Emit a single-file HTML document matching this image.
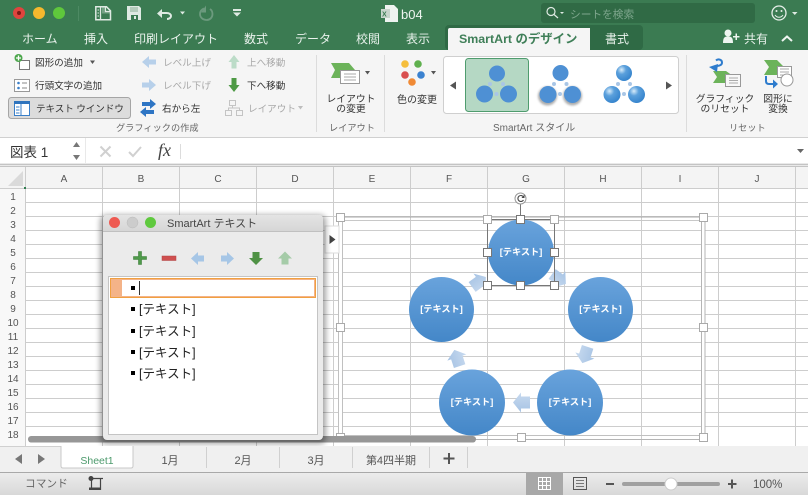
<!DOCTYPE html>
<html><head><meta charset="utf-8">
<style>
html,body{margin:0;padding:0;background:#fff}
svg{display:block}
text{font-family:"Liberation Sans","Noto Sans CJK JP",sans-serif}
.t{font-size:12px;fill:#e9f2ec}
.r{font-size:9.6px;fill:#333}
.d{font-size:9.6px;fill:#a9a9a9}
.g{font-size:9.2px;fill:#666}
.h{font-size:10px;fill:#555;text-anchor:middle}
.s{font-size:11px;fill:#555;text-anchor:middle}
.c{font-size:9.2px;fill:#fff;text-anchor:middle;font-weight:bold}
.l{font-size:12.5px;fill:#222}
.m{font-size:9.8px;fill:#333;text-anchor:middle}
</style></head><body>
<svg width="808" height="495" viewBox="0 0 808 495" xmlns="http://www.w3.org/2000/svg">
<defs>
<linearGradient id="cb" x1="0" y1="0" x2="0" y2="1"><stop offset="0" stop-color="#69a3dc"/><stop offset="1" stop-color="#4487c8"/></linearGradient>
<linearGradient id="ar" x1="0" y1="0" x2="0" y2="1"><stop offset="0" stop-color="#a6c3e4"/><stop offset="1" stop-color="#c8daef"/></linearGradient>
<linearGradient id="st" x1="0" y1="0" x2="0" y2="1"><stop offset="0" stop-color="#ececec"/><stop offset="1" stop-color="#d8d8d8"/></linearGradient>
<linearGradient id="tb" x1="0" y1="0" x2="0" y2="1"><stop offset="0" stop-color="#e4e4e4"/><stop offset="1" stop-color="#d6d6d6"/></linearGradient>
<radialGradient id="sh" cx=".35" cy=".3" r=".8"><stop offset="0" stop-color="#d8ecfa"/><stop offset=".35" stop-color="#5ba0dc"/><stop offset="1" stop-color="#2f7fca"/></radialGradient>
<filter id="bl" x="-10%" y="-10%" width="120%" height="120%"><feGaussianBlur stdDeviation="3"/></filter>
<filter id="bs" x="-30%" y="-30%" width="160%" height="160%"><feGaussianBlur stdDeviation="1"/></filter>
<g id="arr"><path d="M-8.5,-6H0.5V-10L8.5,0L0.5,10V6H-8.5Z" fill="url(#ar)"/></g>
</defs>

<!-- title bar -->
<rect width="808" height="50" fill="#3b7b52"/>
<circle cx="19" cy="13" r="6" fill="#e0443e"/><circle cx="19" cy="13" r="2" fill="#7c1a16"/>
<circle cx="39" cy="13" r="6" fill="#f5b82e"/>
<circle cx="59" cy="13" r="6" fill="#5fc73c"/>
<line x1="78.5" y1="6" x2="78.5" y2="21" stroke="#4d8a63"/>
<path d="M95.800,6.800h10.700l4,4v8.900h-14.700z" fill="none" stroke="#dfeae3" stroke-width="1.500"/>
<path d="M100.500,6.500v13" stroke="#dfeae3" stroke-width="1.300"/><path d="M102,7h3.500v4.500h4.500v2h-8z" fill="#dfeae3" opacity=".35"/>
<path d="M105.500,7v4.500h4.500" fill="none" stroke="#dfeae3" stroke-width="1.200"/>
<path d="M97.500,10h1.500M97.500,13h1.500M97.500,16h1.500" stroke="#dfeae3"/>
<path d="M127,6h12l2,2v12h-14z" fill="#dfeae3"/>
<rect x="130" y="7" width="8" height="5" fill="#b4ccbc"/><rect x="131" y="15" width="7" height="5" fill="#3b7b52"/><rect x="134" y="16" width="2" height="3" fill="#dfeae3"/>
<path d="M157,13.500l5-4.500v9z" fill="#dfeae3"/>
<path d="M160,13h6.500c3,0 4.500,1.500 4.500,3s-1.500,3-4,3" fill="none" stroke="#dfeae3" stroke-width="2"/>
<path d="M180,11.500h5l-2.500,3z" fill="#dfeae3"/>
<path d="M204,8.500c-2.500,1-4,3-4,5.500 0,3.500 3,6 6.500,6s6-2.500 6-6c0-2-1-4-2.500-5" fill="none" stroke="#6c9a7e" stroke-width="1.800"/><path d="M206,5.500v7h-5z" fill="#6c9a7e"/>
<path d="M233,9h8v2h-8zM233,12.500h8l-4,4z" fill="#dfeae3"/>
<path d="M385,5h9l4,4v13h-13z" fill="#eef3f0"/><rect x="381" y="9" width="9" height="9" fill="#c8d5cc"/><text x="382" y="16.500" font-size="7" fill="#3b7b52" font-weight="bold">X</text>
<text x="401" y="19" font-size="13" fill="#eef5f0">b04</text>
<rect x="541" y="3" width="214" height="20" rx="3" fill="#306a45"/>
<circle cx="551" cy="11.500" r="4" fill="none" stroke="#dfeae3" stroke-width="1.200"/><line x1="554" y1="14.500" x2="558" y2="18" stroke="#dfeae3" stroke-width="1.200"/>
<path d="M560,12h4l-2,2z" fill="#dfeae3"/>
<text x="570" y="18" font-size="10.700" fill="#7ea68d">シートを検索</text>
<circle cx="779" cy="13" r="7" fill="none" stroke="#e6efe9" stroke-width="1.300"/><circle cx="776.500" cy="11" r="1" fill="#e6efe9"/><circle cx="781.500" cy="11" r="1" fill="#e6efe9"/><path d="M775,15c2,3 6,3 8,0" fill="none" stroke="#e6efe9"/>
<path d="M792,12h5.500l-2.750,3z" fill="#dfeae3"/>

<rect x="445" y="25" width="198" height="25" rx="4" fill="#2f6a45"/>
<path d="M448,50V30q0-2 2-2H590V50z" fill="#f5f5f5"/>
<text class="t" x="22" y="43">ホーム</text>
<text class="t" x="84" y="43">挿入</text>
<text class="t" x="134" y="43">印刷レイアウト</text>
<text class="t" x="244" y="43">数式</text>
<text class="t" x="295" y="43">データ</text>
<text class="t" x="356" y="43">校閲</text>
<text class="t" x="406" y="43">表示</text>
<text x="459" y="43" font-size="12.400" font-weight="bold" fill="#3f7f58">SmartArt のデザイン</text>
<text class="t" x="605" y="43">書式</text>
<circle cx="728" cy="33" r="3.500" fill="#eef5f0"/><path d="M723,43c0-6 2-6.500 5-6.500s5,.5 5,6.500z" fill="#eef5f0"/><path d="M733,36h2.500v-2.500h1.500v2.500h2.500v1.500h-2.500v2.500h-1.500v-2.500h-2.500z" fill="#eef5f0"/>
<text class="t" x="744" y="43">共有</text>
<path d="M782,41l5-4.500 5,4.500" fill="none" stroke="#eef5f0" stroke-width="2"/>

<!-- ribbon -->
<rect y="50" width="808" height="87" fill="#f5f5f5"/>
<line x1="316.500" y1="55" x2="316.500" y2="132" stroke="#dcdcdc"/>
<line x1="384.500" y1="55" x2="384.500" y2="132" stroke="#dcdcdc"/>
<line x1="686.500" y1="55" x2="686.500" y2="132" stroke="#dcdcdc"/>

<rect x="19.500" y="60.500" width="10" height="9" fill="#fff" stroke="#777"/>
<circle cx="18.500" cy="58" r="4" fill="#4ca64c"/><path d="M16,58h5M18.500,55.500v5" stroke="#fff" stroke-width="1.300"/>
<text class="r" x="35" y="66">図形の追加</text><path d="M90,60.500h5l-2.500,3.500z" fill="#555"/>
<rect x="14.500" y="79.500" width="15" height="12" fill="#fff" stroke="#999"/><circle cx="18.500" cy="83" r="1.300" fill="#3a7fc8"/><circle cx="18.500" cy="88" r="1.300" fill="#3a7fc8"/><path d="M22,83h5M22,88h5" stroke="#888"/>
<text class="r" x="35" y="89">行頭文字の追加</text>
<rect x="8.500" y="97.500" width="122" height="21" rx="3" fill="#dcdcdc" stroke="#a5a5a5"/>
<rect x="14.500" y="101.500" width="15" height="14" fill="#fff" stroke="#3a7fc8"/><rect x="14" y="101" width="16" height="3" fill="#2f74bd"/><path d="M21,104v11" stroke="#3a7fc8"/><path d="M16,107h3.500M16,110h3.500M16,113h3.500" stroke="#3a7fc8"/>
<text class="r" x="36" y="112" letter-spacing="-.1">テキスト ウインドウ</text>
<path d="M142,62l7-6v3.500h7v5h-7v3.500z" fill="#b7d0ea"/>
<text class="d" x="163" y="66">レベル上げ</text>
<path d="M156,85l-7,6v-3.500h-7v-5h7v-3.500z" fill="#b7d0ea"/>
<text class="d" x="163" y="89">レベル下げ</text>
<path d="M156,104l-6-5v3h-8v4h8v3zM140,112l6,-5v3h8v4h-8v3z" fill="#2e75c4"/>
<text class="r" x="162" y="112">右から左</text>
<path d="M234,55l5.500,7h-3v6.500h-5v-6.500h-3z" fill="#bcdcc8"/>
<text class="d" x="247" y="66">上へ移動</text>
<path d="M234,92l5.500-7h-3v-7h-5v7h-3z" fill="#4e9a45"/>
<text class="r" x="247" y="89">下へ移動</text>
<path d="M229.500,100.500h6v5h-6zM225.500,110.500h6v5h-6zM236.500,110.500h6v5h-6zM232.500,105.500v2.500M228.500,110.500v-2.500h11v2.500" fill="none" stroke="#c4c4c4"/>
<text class="d" x="248" y="112">レイアウト</text><path d="M298,106h5l-2.500,3.500z" fill="#bdbdbd"/>
<text class="g" x="116" y="131">グラフィックの作成</text>

<path d="M331,63h18l6,7-5,8H331l4-8z" fill="#6cb35a"/>
<rect x="340.500" y="70.500" width="19" height="13" fill="#fff" stroke="#999"/><path d="M344,74h12M344,77h12M344,80h12" stroke="#aaa"/>
<path d="M365,71h5l-2.500,3.500z" fill="#555"/>
<text class="m" x="351" y="102">レイアウト</text>
<text class="m" x="351" y="112">の変更</text>
<text class="g" x="329" y="131">レイアウト</text>

<circle cx="405" cy="64" r="3.800" fill="#f5be3c"/><circle cx="418" cy="64" r="3.800" fill="#5fb04e"/><circle cx="405" cy="75" r="3.800" fill="#d94f4f"/><circle cx="421" cy="75" r="3.800" fill="#3b82d0"/><circle cx="412" cy="82" r="3.800" fill="#f08a35"/>
<path d="M431,71h5l-2.500,3.500z" fill="#555"/>
<text x="397" y="103" font-size="10" fill="#333">色の変更</text>

<rect x="443.500" y="56.500" width="235" height="57" rx="3" fill="#fff" stroke="#cfcfcf"/>
<path d="M456,81.500l-6,4 6,4z" fill="#555"/><path d="M666,81.500l6,4-6,4z" fill="#555"/>
<rect x="465.500" y="58.500" width="63" height="53" rx="3" fill="#b5d8c4" stroke="#4f9c6e"/>
<g fill="#4e90d4"><circle cx="497" cy="73.500" r="8"/><circle cx="484.500" cy="94" r="8.500"/><circle cx="508.500" cy="94" r="8.500"/></g>
<g fill="#a9c6e6"><circle cx="490" cy="84" r="2"/><circle cx="503" cy="84" r="2"/><circle cx="496.500" cy="94" r="2"/></g>
<g fill="#777" opacity=".6" filter="url(#bs)"><circle cx="547.500" cy="96" r="9.500"/><circle cx="572.500" cy="96" r="9.500"/></g>
<g fill="#4e90d4"><circle cx="560.500" cy="73" r="8"/><circle cx="548" cy="94.500" r="8.500"/><circle cx="572.500" cy="94.500" r="8.500"/></g>
<g fill="#a9c6e6"><circle cx="554" cy="84" r="2"/><circle cx="566.500" cy="84" r="2"/><circle cx="560" cy="94" r="2"/></g>
<g fill="url(#sh)"><circle cx="624" cy="73" r="8"/><circle cx="612" cy="94.500" r="8.500"/><circle cx="636.500" cy="94.500" r="8.500"/></g>
<g fill="#a9c6e6"><circle cx="618" cy="84" r="2"/><circle cx="630" cy="84" r="2"/><circle cx="624" cy="94" r="2"/></g>
<text class="g" x="493" y="131" style="font-size:10px">SmartArt スタイル</text>

<path d="M713,71h13l7,5-4,7H713l4-6z" fill="#6cb35a"/>
<rect x="725.500" y="74.500" width="15" height="12" fill="#f8f8f8" stroke="#999"/><path d="M729,78h9M729,80.500h9M729,83h9" stroke="#aaa"/>
<path d="M709,67l9-3-1,8z" fill="#2e7ccd"/>
<path d="M715,66.500c4-1 7-1 7-4s-4-4-6-2" fill="none" stroke="#2e7ccd" stroke-width="2"/>
<path d="M764,60h13l7,7-4,8H764l5-8z" fill="#6cb35a"/>
<rect x="777.500" y="66.500" width="14" height="11" fill="#fff" stroke="#999"/><path d="M780,69h9M780,72h9M780,75h9" stroke="#aaa"/>
<circle cx="787" cy="80" r="6" fill="#fff" stroke="#999"/>
<path d="M766,76v5q0,3 3,3h4" fill="none" stroke="#2e7ccd" stroke-width="2"/><path d="M773,79.500l5,4.500-5,4.500z" fill="#2e7ccd"/>
<text class="m" x="725" y="102">グラフィック</text>
<text class="m" x="725" y="112">のリセット</text>
<text class="m" x="778" y="102">図形に</text>
<text class="m" x="778" y="112">変換</text>
<text class="g" x="729" y="131">リセット</text>

<!-- formula bar -->
<rect y="137" width="808" height="30" fill="#e9e9e9"/>
<rect y="138" width="85" height="25" fill="#fff"/>
<rect x="86" y="138" width="722" height="25" fill="#fff"/>
<line x1="0" y1="137.500" x2="808" y2="137.500" stroke="#d0d0d0"/>
<line x1="0" y1="164.500" x2="808" y2="164.500" stroke="#c4c4c4"/>
<line x1="0" y1="166.500" x2="808" y2="166.500" stroke="#c4c4c4"/>
<text x="10" y="157" font-size="13.500" fill="#333">図表 1</text>
<path d="M76.500,142l3.500,5h-7zM76.500,160l3.500-5h-7z" fill="#777"/>
<path d="M100.500,146.500l10,10M110.500,146.500l-10,10" stroke="#d0d0d0" stroke-width="2"/>
<path d="M129,152l4,4 8-9" fill="none" stroke="#d0d0d0" stroke-width="2"/>
<text x="158" y="156" font-size="18" font-style="italic" style="font-family:'Liberation Serif',serif" fill="#444">fx</text>
<line x1="180.500" y1="144" x2="180.500" y2="159" stroke="#dcdcdc"/>
<path d="M797,149h7l-3.500,4z" fill="#666"/>

<!-- sheet -->
<rect y="167" width="808" height="279" fill="#fff"/>
<rect y="167" width="808" height="21" fill="#f4f4f4"/>
<rect y="188" width="25" height="258" fill="#f8f8f8"/>
<path d="M23,171v15H8z" fill="#dadada"/>
<g stroke="#cdcdcd" fill="none">
<path d="M0,188.500H808M25,202.500H808M25,216.500H808M25,230.500H808M25,244.500H808M25,258.500H808M25,272.500H808M25,286.500H808M25,300.500H808M25,314.500H808M25,328.500H808M25,342.500H808M25,356.500H808M25,370.500H808M25,384.500H808M25,398.500H808M25,412.500H808M25,426.500H808"/>
<path d="M25.500,167V446M102.500,167V446M179.500,167V446M256.500,167V446M333.500,167V446M410.500,167V446M487.500,167V446M564.500,167V446M641.500,167V446M718.500,167V446M795.500,167V446"/>
</g>
<rect x="24" y="187" width="2" height="2" fill="#2e7d4f"/>
<g>
<text class="h" x="64" y="182">A</text><text class="h" x="141" y="182">B</text><text class="h" x="218" y="182">C</text><text class="h" x="295" y="182">D</text><text class="h" x="372" y="182">E</text><text class="h" x="449" y="182">F</text><text class="h" x="526" y="182">G</text><text class="h" x="603" y="182">H</text><text class="h" x="680" y="182">I</text><text class="h" x="757" y="182">J</text>
</g>
<g>
<text class="h" x="13" y="200">1</text><text class="h" x="13" y="214">2</text><text class="h" x="13" y="228">3</text><text class="h" x="13" y="242">4</text><text class="h" x="13" y="256">5</text><text class="h" x="13" y="270">6</text><text class="h" x="13" y="284">7</text><text class="h" x="13" y="298">8</text><text class="h" x="13" y="312">9</text><text class="h" x="13" y="326">10</text><text class="h" x="13" y="340">11</text><text class="h" x="13" y="354">12</text><text class="h" x="13" y="368">13</text><text class="h" x="13" y="382">14</text><text class="h" x="13" y="396">15</text><text class="h" x="13" y="410">16</text><text class="h" x="13" y="424">17</text><text class="h" x="13" y="438">18</text>
</g>

<!-- smartart frame -->
<line x1="340" y1="217" x2="703" y2="217" stroke="#a8a8a8"/>
<line x1="340" y1="220.500" x2="703" y2="220.500" stroke="#c8c8c8"/>
<line x1="340" y1="435.500" x2="703" y2="435.500" stroke="#c0c0c0"/>
<line x1="340" y1="439.500" x2="703" y2="439.500" stroke="#b5b5b5"/>
<rect x="338.500" y="217" width="4" height="222" fill="#fff" stroke="#c0c0c0"/>
<rect x="701.500" y="217" width="3.500" height="222" fill="#fff" stroke="#b5b5b5"/>
<use href="#arr" transform="translate(559,279) rotate(36)"/>
<use href="#arr" transform="translate(585,355) rotate(108)"/>
<use href="#arr" transform="translate(521.500,402.500) rotate(180)"/>
<use href="#arr" transform="translate(457,358) rotate(-108)"/>
<use href="#arr" transform="translate(479,282) rotate(-36)"/>
<g fill="url(#cb)">
<circle cx="521" cy="252.500" r="33"/><circle cx="600.500" cy="309.500" r="32.500"/><circle cx="570" cy="402.500" r="33"/><circle cx="472" cy="402.500" r="33"/><circle cx="441.500" cy="309.500" r="32.500"/>
</g>
<text class="c" x="521" y="255">[テキスト]</text>
<text class="c" x="600.500" y="312">[テキスト]</text>
<text class="c" x="570" y="405">[テキスト]</text>
<text class="c" x="472" y="405">[テキスト]</text>
<text class="c" x="441.500" y="312">[テキスト]</text>
<rect x="487.500" y="219.500" width="67" height="66" fill="none" stroke="#777"/>
<line x1="520.500" y1="204" x2="520.500" y2="219" stroke="#777"/>
<circle cx="520.500" cy="198.500" r="5.500" fill="#fff" stroke="#999"/>
<path d="M523.500,197a3,3 0 1 0 0,3" fill="none" stroke="#444" stroke-width="1.100"/><path d="M524.500,194.500v3.500h-3z" fill="#444"/>
<g fill="#fff" stroke="#777">
<rect x="483.500" y="215.500" width="8" height="8" stroke="#aaa"/><rect x="516.500" y="215.500" width="8" height="8"/><rect x="550.500" y="215.500" width="8" height="8" stroke="#aaa"/>
<rect x="483.500" y="248.500" width="8" height="8"/><rect x="550.500" y="248.500" width="8" height="8"/>
<rect x="483.500" y="281.500" width="8" height="8"/><rect x="516.500" y="281.500" width="8" height="8"/><rect x="550.500" y="281.500" width="8" height="8"/>
</g>
<g fill="#fff" stroke="#aaa">
<rect x="699.500" y="213.500" width="8" height="8"/><rect x="699.500" y="323.500" width="8" height="8"/><rect x="699.500" y="433.500" width="8" height="8"/>
<rect x="517.500" y="433.500" width="8" height="8"/><rect x="336.500" y="213.500" width="8" height="8"/><rect x="336.500" y="323.500" width="8" height="8"/><rect x="336.500" y="433.500" width="8" height="8"/>
</g>
<!-- scrollbar -->
<rect x="28" y="436" width="448" height="6.500" rx="3.200" fill="#979797"/>

<!-- flyout -->
<path d="M325,226h14v27h-14z" fill="#fff" stroke="#ddd"/>
<path d="M329.500,235l6,4.500-6,4.500z" fill="#444"/>

<!-- dialog -->
<rect x="100" y="215" width="226" height="229" rx="6" fill="#000" opacity=".35" filter="url(#bl)"/>
<rect x="103" y="215" width="220" height="225" rx="4" fill="#ebebeb"/>
<path d="M103,231v-12q0-4 4-4H319q4,0 4,4v12z" fill="url(#tb)"/>
<line x1="103" y1="231.500" x2="323" y2="231.500" stroke="#c0c0c0"/>
<circle cx="114.500" cy="222.500" r="5.500" fill="#ee5a52"/>
<circle cx="132.500" cy="222.500" r="5.500" fill="#cccccc" stroke="#bbb" stroke-width=".5"/>
<circle cx="150.500" cy="222.500" r="5.500" fill="#5fc93e"/>
<text x="167" y="227" font-size="11" fill="#444">SmartArt テキスト</text>

<path d="M138.500,251.500h3v5h5v3h-5v5h-3v-5h-5v-3h5z" fill="#4f9a4a" stroke="#3f7f3c" stroke-width=".6"/>
<rect x="162" y="256" width="14" height="4.500" fill="#cf4f4f" stroke="#b04545" stroke-width=".5"/>
<path d="M191,258.500l7-6.500v3.500h6v6h-6v3.500z" fill="#a6c6e6"/>
<path d="M234,258.500l-7-6.500v3.500h-6v6h6v3.500z" fill="#a6c6e6"/>
<path d="M256,265l7-7h-3.500v-6h-7v6h-3.500z" fill="#4f9245"/>
<path d="M285,251.500l7,7h-3.500v6h-7v-6h-3.500z" fill="#a5cba8"/>

<rect x="108.500" y="276.500" width="209" height="158" fill="#fff" stroke="#c4c4c4"/>
<rect x="110.500" y="278.500" width="205" height="19" fill="#f4b388" stroke="#f0a040"/>
<rect x="122" y="280" width="192" height="16" fill="#fff"/>
<rect x="131" y="286" width="4" height="4" fill="#000"/>
<line x1="139.500" y1="281" x2="139.500" y2="295" stroke="#333"/>
<rect x="131" y="307" width="4" height="4" fill="#000"/><text class="l" x="139" y="313.500">[テキスト]</text>
<rect x="131" y="329" width="4" height="4" fill="#000"/><text class="l" x="139" y="335.500">[テキスト]</text>
<rect x="131" y="350" width="4" height="4" fill="#000"/><text class="l" x="139" y="357">[テキスト]</text>
<rect x="131" y="371" width="4" height="4" fill="#000"/><text class="l" x="139" y="378">[テキスト]</text>

<!-- tabs -->
<rect y="446" width="808" height="26" fill="#f0f0f0"/>
<line x1="0" y1="446.500" x2="61" y2="446.500" stroke="#d0d0d0"/>
<path d="M15,459l7-5v10z" fill="#777"/><path d="M45,459l-7-5v10z" fill="#777"/>
<path d="M61,446v20q0,2 2,2H131q2,0 2-2V446" fill="#fff" stroke="#c8c8c8"/>
<text x="97" y="464" font-size="10.500" fill="#4c9a6c" text-anchor="middle">Sheet1</text>
<text class="s" x="170" y="464">1月</text>
<text class="s" x="243" y="464">2月</text>
<text class="s" x="316" y="464">3月</text>
<text class="s" x="391" y="464">第4四半期</text>
<path d="M206.500,447v21M279.500,447v21M352.500,447v21M429.500,447v21M467.500,447v21" stroke="#d0d0d0"/>
<path d="M448,453h2v4.500h4.500v2h-4.500v4.500h-2v-4.500h-4.500v-2h4.500z" fill="#555"/>

<!-- status -->
<rect y="473" width="808" height="22" fill="url(#st)"/>
<line x1="0" y1="472.500" x2="808" y2="472.500" stroke="#a9a9a9"/>
<text x="25" y="487" font-size="10.700" fill="#666">コマンド</text>
<circle cx="91" cy="478.500" r="2.500" fill="#444"/>
<path d="M93,478.500h10M100.500,478.500v11.500M91.500,480v8" fill="none" stroke="#444" stroke-width="1.200"/>
<rect x="89" y="487.500" width="11" height="2.500" fill="#444"/>
<rect x="526" y="473" width="37" height="22" fill="#a8a8a8"/>
<path d="M538.500,477.500h12v12h-12zM538.500,481.500h12M538.500,485.500h12M542.500,477.500v12M546.500,477.500v12" fill="none" stroke="#fff"/>
<rect x="573.500" y="477.500" width="13" height="12" fill="none" stroke="#555"/><path d="M576,480.500h8M576,483.500h8M576,486.500h8" stroke="#777"/>
<rect x="606" y="483" width="8" height="2" fill="#555"/>
<rect x="622" y="482" width="98" height="4" rx="2" fill="#a0a0a0"/>
<circle cx="671" cy="484" r="6" fill="#fff" stroke="#ccc"/>
<path d="M728,483h3v-3.500h2v3.500h3.500v2H733v3.500h-2V485h-3z" fill="#555"/>
<text x="753" y="488" font-size="11.500" fill="#555">100%</text>
</svg>
</body></html>
